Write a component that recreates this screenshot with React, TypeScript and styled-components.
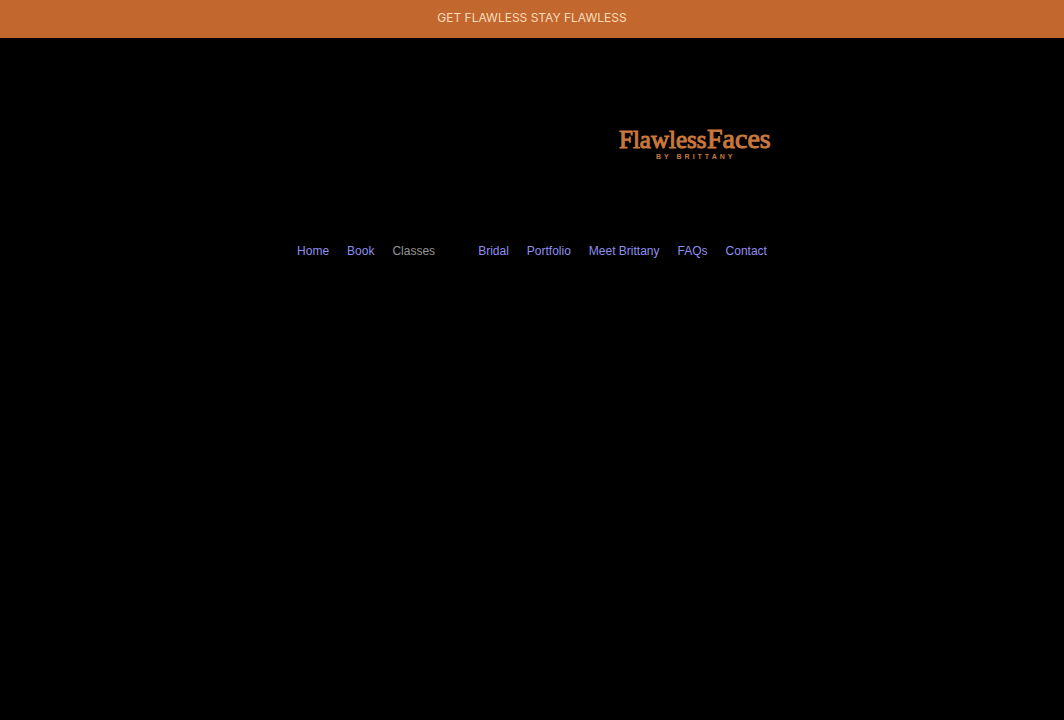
import React from "react";
import styled, { createGlobalStyle } from "styled-components";

const GlobalStyle = createGlobalStyle`
  body {
    margin: 0;
    background: #000;
    font-family: "Liberation Sans", Arial, sans-serif;
  }
`;

const Banner = styled.div`
  padding: 8px 16px 10px;
  background: #c2672e;
  color: #fbdcb9;
  font-family: Inter, "Liberation Sans", sans-serif;
  font-size: 12px;
  line-height: 20px;
  text-align: center;
`;

const Header = styled.header`
  display: flex;
  flex-direction: column;
  width: fit-content;
  max-width: 100%;
  margin: 0 auto;
  padding-top: 84px;
`;

const LogoLink = styled.a`
  align-self: flex-end;
  display: block;
  line-height: 0;
`;

const LogoArt = styled.svg`
  display: block;
  fill: #c9773d;
  stroke: #c9773d;
  font-family: "Liberation Serif", "Times New Roman", serif;
`;

const LogoTagline = styled.text`
  font-family: "Liberation Sans", Arial, sans-serif;
  font-size: 7px;
  font-weight: 700;
  letter-spacing: 3px;
  stroke: none;
`;

const Nav = styled.nav`
  margin-top: 80px;
  padding: 0 4px;
`;

const NavList = styled.ul`
  display: flex;
  flex-wrap: wrap;
  gap: 18px;
  margin: 0;
  padding: 0;
  list-style: none;
`;

const NavItem = styled.li<{ $hasMenu?: boolean }>`
  padding-right: ${({ $hasMenu }) => ($hasMenu ? "25px" : "0")};
`;

const NavLink = styled.a<{ $muted?: boolean }>`
  color: ${({ $muted }) => ($muted ? "#969696" : "#8f8ff0")};
  font-size: 12px;
  line-height: 16px;
  text-decoration: none;
  white-space: nowrap;
`;

const links = [
  { label: "Home" },
  { label: "Book" },
  { label: "Classes", hasMenu: true },
  { label: "Bridal" },
  { label: "Portfolio" },
  { label: "Meet Brittany" },
  { label: "FAQs" },
  { label: "Contact" },
];

export default function App() {
  return (
    <>
      <GlobalStyle />
      <Banner>GET FLAWLESS STAY FLAWLESS</Banner>
      <Header>
        <LogoLink href="#home" aria-label="Flawless Faces by Brittany">
          <LogoArt width="156" height="39" viewBox="0 0 156 39">
            <text x="4" y="26" fontSize="25">Flawless</text>
            <text x="92" y="26" fontSize="28">Faces</text>
            <LogoTagline x="41" y="37">BY BRITTANY</LogoTagline>
          </LogoArt>
        </LogoLink>
        <Nav aria-label="Main">
          <NavList>
            {links.map(({ label, hasMenu }) => (
              <NavItem key={label} $hasMenu={hasMenu}>
                <NavLink href="#" $muted={hasMenu}>{label}</NavLink>
              </NavItem>
            ))}
          </NavList>
        </Nav>
      </Header>
    </>
  );
}
